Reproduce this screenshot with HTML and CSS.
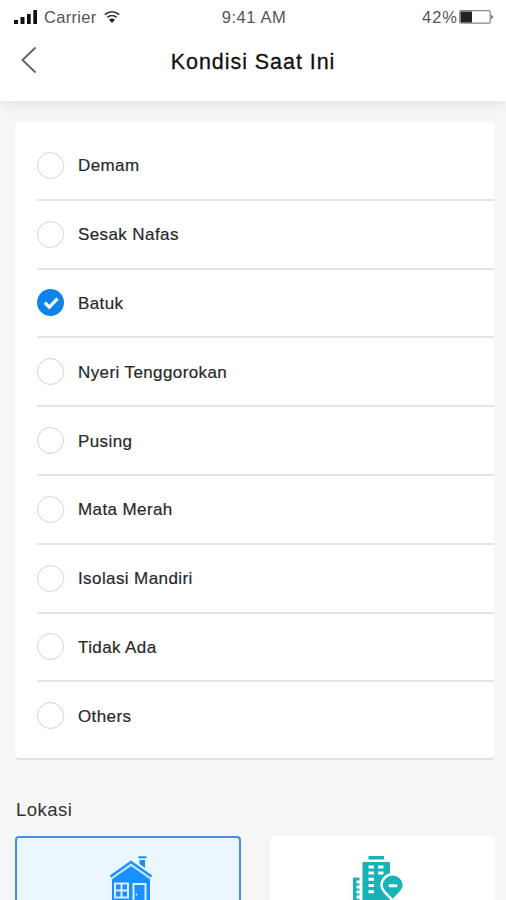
FILE: index.html
```html
<!DOCTYPE html>
<html lang="id">
<head>
<meta charset="utf-8">
<title>Kondisi Saat Ini</title>
<link rel="stylesheet" href="styles.css">
</head>
<body>
<header class="header">
  <div class="status">
    <div class="status-left">
      <svg class="signal" width="24" height="14" viewBox="0 0 24 14"><path d="M0 10h4v4H0zM6.500 7h4v7h-4zM13 4h3.700v10H13zM19.300 0H23v14h-3.700z"/></svg>
      <span class="carrier">Carrier</span>
      <svg class="wifi" width="16" height="12" viewBox="0 0 16 12"><path d="M.8 3.500Q8-2 15.200 3.500M3.200 6.300Q8 2.800 12.800 6.300"/><path class="wifi-dot" d="M5 8.700Q8 6.300 11 8.700L8 12z"/></svg>
    </div>
    <span class="time">9:41 AM</span>
    <div class="status-right">
      <span class="percent">42%</span>
      <svg class="battery" width="35" height="14" viewBox="0 0 35 14"><rect class="battery-case" x=".7" y=".7" width="30.500" height="12.500" rx="1"/><path class="battery-fill" d="M1.500 1.500H13V12.500H1.500z"/><path class="battery-tip" d="M32 4.500L34.500 7L32 9.500z"/></svg>
    </div>
  </div>
  <div class="nav">
    <svg class="back" width="16" height="28" viewBox="0 0 16 28"><path d="M13.500 1.500L.5 14L13.500 26.500"/></svg>
    <h1 class="title">Kondisi Saat Ini</h1>
  </div>
</header>
<main class="content">
  <ul class="conditions">
    <li class="condition"><span class="radio"></span><span class="label">Demam</span></li>
    <li class="condition"><span class="radio"></span><span class="label">Sesak Nafas</span></li>
    <li class="condition"><span class="radio checked"><svg width="26" height="26" viewBox="0 0 26 26"><path d="M6.800 12.700L11.300 17.200L19.500 8.700"/></svg></span><span class="label">Batuk</span></li>
    <li class="condition"><span class="radio"></span><span class="label">Nyeri Tenggorokan</span></li>
    <li class="condition"><span class="radio"></span><span class="label">Pusing</span></li>
    <li class="condition"><span class="radio"></span><span class="label">Mata Merah</span></li>
    <li class="condition"><span class="radio"></span><span class="label">Isolasi Mandiri</span></li>
    <li class="condition"><span class="radio"></span><span class="label">Tidak Ada</span></li>
    <li class="condition"><span class="radio"></span><span class="label">Others</span></li>
  </ul>
  <h2 class="section-title">Lokasi</h2>
  <div class="locations">
    <div class="location selected">
      <svg class="house" width="44" height="44" viewBox="0 0 44 44">
        <path class="chimney" d="M29.500 1.300H37.500"/>
        <path fill="#1890ff" d="M30.500 4H36V12L30.500 8z"/>
        <path fill="#1890ff" d="M22 9L41 22V44H3V22z"/>
        <path class="roof-gap" d="M2 23L22 9L42 23"/>
        <path class="roof" d="M1.500 20.500L22 6L42.500 20.500"/>
        <rect class="window" x="6" y="27.500" width="13" height="14"/>
        <path class="window-bar" d="M12.500 28V41.500M6 34.500H19"/>
        <path class="door" d="M24.500 44V28H36.500V44"/>
        <circle cx="27.500" cy="38.500" r="1" fill="#ebf6ff"/>
      </svg>
    </div>
    <div class="location">
      <svg class="building" width="52" height="44" viewBox="0 0 52 44">
        <path fill="#17b3b6" d="M15.500 0H31V3.500H15.500zM9.500 7Q9.500 6 10.500 6H36Q37 6 37 7V44H9.500zM0 23Q0 21.500 1.500 21.500H6.500V44H0z"/>
        <path class="panes" d="M15.500 11H21M25 11H30.500M15.500 17H21M25 17H30.500M15.500 23.300H21M15.500 29.600H21M15.500 35.800H21M3.500 26H7M3.500 31H7M3.500 36H7M3.500 41H7"/>
        <path class="pin" d="M39.700 44.500C36 40 28.500 35 28.500 29.500A11.200 11.200 0 0 1 50.900 29.500C50.900 35 43.500 40 39.700 44.500z"/>
        <path class="pin-mark" d="M37 29.700H43"/>
      </svg>
    </div>
  </div>
</main>
</body>
</html>
```
FILE: styles.css
```css
* { box-sizing: border-box; }
body {
  margin: 0;
  height: 900px;
  overflow: hidden;
  background: #f6f6f6;
  color: #292929;
  font-family: "Liberation Sans", Arial, sans-serif;
}
svg { display: block; flex: none; overflow: visible; fill: none; }
.header {
  height: 101px;
  background: #fff;
  box-shadow: 0 2px 14px rgba(0, 0, 0, .09);
}
.status {
  display: grid;
  grid-template-columns: 1fr auto 1fr;
  align-items: center;
  height: 34px;
  padding: 0 12px 0 14px;
  color: #555;
  font-size: 17px;
  line-height: 20px;
}
.status-left, .status-right { display: flex; align-items: center; }
.status-right { justify-content: flex-end; }
.signal { fill: #111; }
.carrier { margin-left: 6px; font-size: 16.5px; letter-spacing: .3px; }
.wifi { margin-left: 7px; stroke: #333; stroke-width: 1.6; }
.wifi-dot { fill: #222; stroke: none; }
.time { font-size: 16.5px; letter-spacing: .6px; }
.percent { font-size: 16.5px; letter-spacing: 1px; }
.battery { margin-left: 1px; }
.battery-case { stroke: #888; stroke-width: 1.2; }
.battery-fill { fill: #222; }
.battery-tip { fill: #777; }
.nav { display: grid; grid-template-columns: 1fr auto 1fr; padding: 12px 22px 0; }
.back { stroke: #666; stroke-width: 2; }
.title {
  margin: 3px 0 0;
  color: #111;
  font-size: 21.5px;
  font-weight: 400;
  line-height: 26px;
  letter-spacing: .95px;
  -webkit-text-stroke: .3px #111;
}
.content { padding: 21px 12px 0 15px; }
.conditions {
  height: 636px;
  margin: 0;
  padding: 10px 0 0 22px;
  list-style: none;
  background: #fff;
  border-radius: 4px;
  box-shadow: 0 2px 1px rgba(0, 0, 0, .09);
}
.condition {
  display: flex;
  align-items: center;
  gap: 14px;
  height: 68.8px;
  border-bottom: 2px solid #e5e5e5;
  font-size: 17px;
  line-height: 20px;
  letter-spacing: .4px;
  -webkit-text-stroke: .2px #292929;
}
.condition:last-child { border-bottom: 0; padding-bottom: 2px; }
.label { padding-top: 2px; }
.radio { flex: none; width: 27px; height: 27px; border: 1.5px solid #d2d2d2; border-radius: 50%; }
.radio.checked { border: 0; padding: .5px; background: #0f83e8; }
.radio svg { stroke: #fff; stroke-width: 3.2; }
.section-title {
  margin: 41px 0 15px;
  padding-left: 1px;
  color: #333;
  font-size: 18.5px;
  font-weight: 400;
  line-height: 22px;
  letter-spacing: .5px;
}
.locations { display: grid; grid-template-columns: 226px 225px; gap: 29px; }
.location {
  display: flex;
  justify-content: center;
  height: 64px;
  padding-top: 20px;
  border-radius: 4px 4px 0 0;
  background: #fff;
}
.location.selected { padding-top: 18px; border: 2px solid #3f90ea; border-bottom: 0; background: #ebf6ff; }
.house { margin-left: 5px; }
.chimney { stroke: #1890ff; stroke-width: 2; }
.roof { stroke: #1890ff; stroke-width: 2.4; }
.roof-gap { stroke: #c5e3ff; stroke-width: 1.6; }
.window, .window-bar, .door { stroke: #d8edff; stroke-width: 2; }
.building { margin-right: 8px; }
.panes { stroke: #fff; stroke-width: 3; }
.pin { fill: #17b3b6; stroke: #fff; stroke-width: 2.5; }
.pin-mark { stroke: #fff; stroke-width: 3; stroke-linecap: round; }
```
